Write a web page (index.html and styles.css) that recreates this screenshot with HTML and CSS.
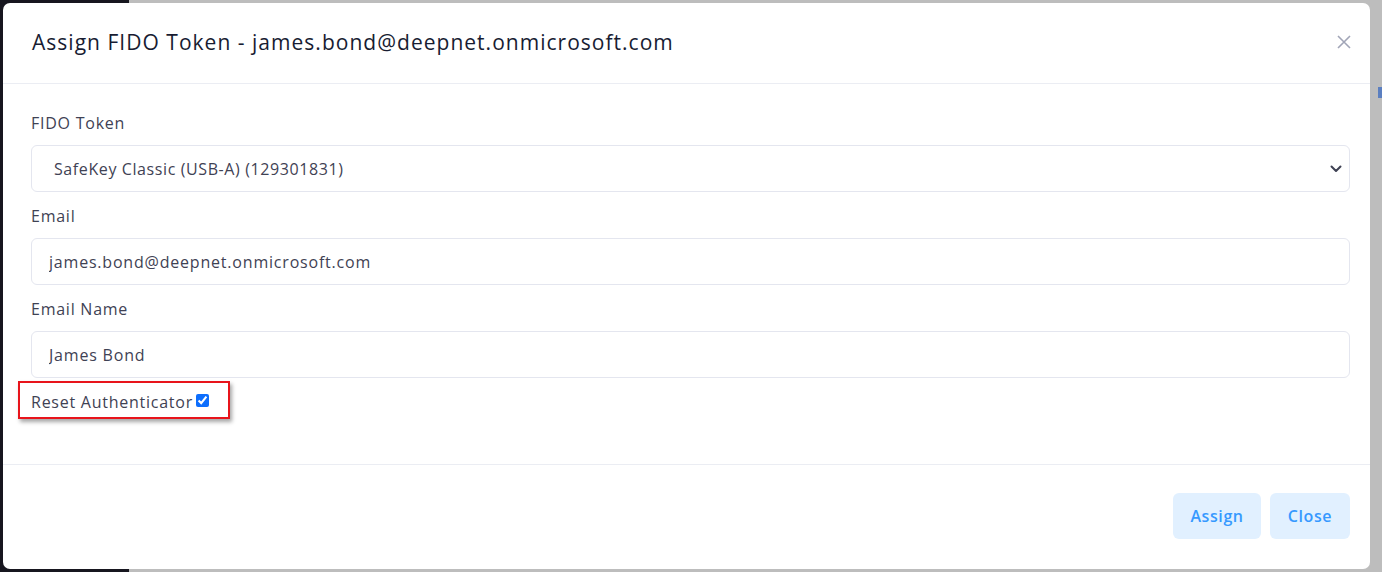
FILE: index.html
```html
<!DOCTYPE html>
<html>
<head>
<meta charset="utf-8">
<link rel="stylesheet" href="styles.css">
</head>
<body>
<div class="page">
  <div class="sidebar"></div>
  <div class="backdrop"><span class="behind-btn"></span></div>
</div>
<div class="modal">
  <div class="modal-header">
    <h3 class="modal-title">Assign FIDO Token - james.bond@deepnet.onmicrosoft.com</h3>
    <button class="close-x" aria-label="Close">
      <svg width="14" height="14" viewBox="0 0 14 14"><path d="M1 1L13 13M13 1L1 13" stroke="#a1a5b7" stroke-width="1.6" fill="none"/></svg>
    </button>
  </div>
  <div class="modal-body">
    <div class="group">
      <label class="label">FIDO Token</label>
      <div class="select-wrap">
        <select class="control select">
          <option>SafeKey Classic (USB-A) (129301831)</option>
        </select>
        <svg class="chev" width="12" height="8" viewBox="0 0 12 8"><path d="M1.5 1.5L6 6L10.5 1.5" stroke="#3f4254" stroke-width="2" fill="none" stroke-linecap="round" stroke-linejoin="round"/></svg>
      </div>
    </div>
    <div class="group">
      <label class="label">Email</label>
      <input class="control" type="text" value="james.bond@deepnet.onmicrosoft.com">
    </div>
    <div class="group">
      <label class="label">Email Name</label>
      <input class="control" type="text" value="James Bond">
    </div>
    <div class="check-row">
      <label class="label check-label">Reset Authenticator <input type="checkbox" class="check" checked></label>
      <span class="highlight"></span>
    </div>
  </div>
  <div class="modal-footer">
    <button class="btn">Assign</button>
    <button class="btn btn-close">Close</button>
  </div>
</div>
</body>
</html>
```

FILE: styles.css
```css
* { box-sizing: border-box; }
html, body { margin: 0; padding: 0; }
body {
  width: 1382px;
  height: 572px;
  overflow: hidden;
  position: relative;
  font-family: "Open Sans", "Liberation Sans", sans-serif;
}
.page {
  display: flex;
  height: 572px;
}
.sidebar {
  width: 129px;
  background: #17161f;
}
.backdrop {
  flex: 1;
  background: #bdbdbd;
  position: relative;
}
.behind-btn {
  position: absolute;
  left: 1249px;
  top: 87px;
  width: 5px;
  height: 11px;
  background: #5b7fc0;
}
.modal {
  position: absolute;
  left: 3px;
  top: 3px;
  width: 1367px;
  height: 566px;
  background: #fff;
  border-radius: 7px;
  display: flex;
  flex-direction: column;
}
.modal-header {
  height: 81px;
  border-bottom: 1px solid #ebedf3;
  display: flex;
  align-items: center;
  justify-content: space-between;
  padding: 0 19px 3px 29px;
}
.modal-title {
  margin: 0;
  font-size: 21px;
  font-weight: 500;
  color: #181c32;
  letter-spacing: 1.02px;
}
.close-x {
  border: 0;
  background: none;
  padding: 0;
  width: 14px;
  height: 14px;
  display: flex;
}
.modal-body {
  height: 381px;
  border-bottom: 1px solid #ebedf3;
  padding: 28px 20px 0 28px;
}
.group {
  margin-bottom: 13px;
}
.label {
  display: block;
  font-size: 16px;
  line-height: 22px;
  color: #3f4254;
  letter-spacing: 0.75px;
  margin-bottom: 11px;
}
.control {
  display: block;
  width: 100%;
  height: 47px;
  border: 1px solid #e4e6ef;
  border-radius: 6px;
  padding: 0 17px;
  font-family: inherit;
  font-size: 16px;
  letter-spacing: 0.8px;
  color: #3f4254;
  background: #fff;
  outline: none;
}
.select-wrap {
  position: relative;
}
.select {
  appearance: none;
  -webkit-appearance: none;
  padding-left: 22px;
  letter-spacing: 0.6px;
}
.chev {
  position: absolute;
  right: 8px;
  top: 20px;
}
.check-row {
  position: relative;
}
.check-label {
  display: flex;
  align-items: center;
  gap: 3px;
  margin: 0;
}
.check {
  margin: 0 0 3px 0;
  width: 13px;
  height: 13px;
  accent-color: #0d6efd;
}
.highlight {
  position: absolute;
  left: -13px;
  top: -10px;
  width: 212px;
  height: 38px;
  border: 2px solid #e8141b;
  box-shadow: 2px 3px 4px rgba(0,0,0,0.35);
}
.modal-footer {
  flex: 1;
  display: flex;
  justify-content: flex-end;
  align-items: flex-start;
  gap: 9px;
  padding: 28px 20px 0 0;
}
.btn {
  height: 46px;
  width: 88px;
  border: 0;
  border-radius: 6px;
  background: #e1f0ff;
  color: #3699ff;
  font-family: inherit;
  font-size: 16px;
  font-weight: 600;
  letter-spacing: 0.6px;
}
.btn-close {
  width: 80px;
}
```
